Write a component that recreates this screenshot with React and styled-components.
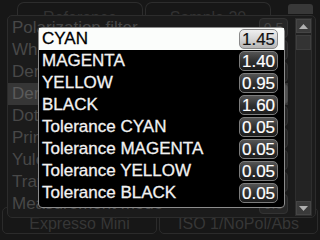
import styled, { createGlobalStyle } from "styled-components";

const GlobalStyle = createGlobalStyle`
  html, body {
    margin: 0;
    padding: 0;
    background: #171717;
  }
  body {
    font-family: "Liberation Sans", Arial, sans-serif;
  }
`;

const Screen = styled.div`
  position: relative;
  width: 320px;
  height: 240px;
  overflow: hidden;
  background: #171717;
`;

const TopTabs = styled.div`
  display: flex;
  align-items: flex-end;
  height: 15px;
  padding-left: 17px;
  gap: 2px;
`;

const Tab = styled.div`
  width: ${(p) => p.$w}px;
  height: 12px;
  border: 1px solid #2d2d2d;
  border-bottom: none;
  border-radius: 7px 7px 0 0;
  color: #323232;
  font-size: 16px;
  line-height: 30px;
  text-align: center;
  overflow: hidden;
`;

const CornerTab = styled.div`
  margin-left: auto;
  margin-right: 7px;
  width: 25px;
  height: 10px;
  margin-bottom: 1px;
  background: #383838;
  border-radius: 3px 3px 0 0;
`;

const Panel = styled.div`
  position: relative;
  z-index: 1;
  display: flex;
  margin-left: 7px;
  width: 307px;
  height: 201px;
  border: 1px solid #2c2c2c;
  border-radius: 5px;
  background: #1b1b1b;
`;

const List = styled.div`
  flex: 1;
  padding-top: 1px;
  padding-right: 7px;
  overflow: hidden;
`;

const BgRow = styled.div`
  display: flex;
  align-items: center;
  justify-content: space-between;
  height: 22px;
  padding-left: 4px;
  background: ${(p) => (p.$active ? "#363636" : "transparent")};
  color: ${(p) => (p.$active ? "#5a5a5a" : "#484848")};
  font-size: 17px;
  white-space: nowrap;
`;

const BgValue = styled.div`
  flex: none;
  width: 27px;
  height: 18px;
  border: 1px solid ${(p) => (p.$active ? "#4a4a4a" : "#333")};
  border-radius: 4px;
  background: ${(p) => (p.$active ? "#505050" : "#262626")};
  color: #444;
  font-size: 14px;
  line-height: 18px;
  text-align: center;
`;

const ScrollBar = styled.div`
  display: flex;
  flex-direction: column;
  width: 15px;
  margin: 2px 3px 1px 0;
  background: #232323;
  border: 1px solid #2e2e2e;
`;

const ArrowBtn = styled.div`
  display: flex;
  align-items: center;
  justify-content: center;
  height: 12px;
  background: #3a3a3a;
  border: 1px solid #454545;
`;

const Thumb = styled.div`
  height: 13px;
  margin-top: 2px;
  background: #333;
  border: 1px solid #3e3e3e;
`;

const Track = styled.div`
  flex: 1;
`;

const BottomTabs = styled.div`
  display: flex;
  gap: 2px;
  margin-top: -11px;
  padding-left: 2px;
`;

const BottomTab = styled.div`
  width: ${(p) => p.$w}px;
  height: 25px;
  border: 1px solid #2b2b2b;
  border-radius: 5px;
  color: #363636;
  font-size: 16px;
  line-height: 31px;
  text-align: center;
  overflow: hidden;
`;

const Popup = styled.div`
  position: absolute;
  z-index: 2;
  left: 38px;
  top: 27px;
  width: 245px;
  padding: 0 0 3px;
  border: 1px solid #8c8c8c;
  border-radius: 4px;
  background: #000;
`;

const Option = styled.div`
  display: flex;
  align-items: center;
  justify-content: space-between;
  height: 22px;
  padding: 0 6px 0 3px;
  background: ${(p) => (p.$selected ? "#fbfdfb" : "#000")};
  color: ${(p) => (p.$selected ? "#000" : "#f2f2f2")};
  font-size: 17px;
  -webkit-text-stroke: 0.3px ${(p) => (p.$selected ? "#000" : "#f2f2f2")};
`;

const ValueBox = styled.div`
  width: 37px;
  height: 18px;
  border: 1px solid ${(p) => (p.$selected ? "#8a8a8a" : "#7c7c7c")};
  border-radius: 5px;
  background: ${(p) =>
    p.$selected
      ? "linear-gradient(#efefef, #d6d6d6 50%, #b4b4b4)"
      : "linear-gradient(#555, #303030 50%, #1c1c1c)"};
  color: ${(p) => (p.$selected ? "#111" : "#fff")};
  -webkit-text-stroke: 0.2px ${(p) => (p.$selected ? "#111" : "#fff")};
  font-size: 17px;
  line-height: 19px;
  text-align: center;
`;

const bgRows = [
  "Polarization filter",
  "White base",
  "Density standard",
  "Density filter",
  "Dot gain",
  "Print characteristics",
  "Yule-Nielsen factor",
  "Trapping",
  "Measurement mode",
];

const options = [
  ["CYAN", "1.45"],
  ["MAGENTA", "1.40"],
  ["YELLOW", "0.95"],
  ["BLACK", "1.60"],
  ["Tolerance CYAN", "0.05"],
  ["Tolerance MAGENTA", "0.05"],
  ["Tolerance YELLOW", "0.05"],
  ["Tolerance BLACK", "0.05"],
];

export default function App() {
  return (
    <>
      <GlobalStyle />
      <Screen>
        <TopTabs>
          <Tab $w={124}>Reference</Tab>
          <Tab $w={124}>Sample 20</Tab>
          <CornerTab />
        </TopTabs>
        <Panel>
          <List>
            {bgRows.map((label, i) => (
              <BgRow key={label} $active={i === 3}>
                <span>{label}</span>
                <BgValue $active={i === 3}>0.5</BgValue>
              </BgRow>
            ))}
          </List>
          <ScrollBar>
            <ArrowBtn>
              <svg width="9" height="5" viewBox="0 0 9 5">
                <path d="M0 5 L4.5 0 L9 5 Z" fill="#b0b0b0" />
              </svg>
            </ArrowBtn>
            <Thumb />
            <Track />
            <ArrowBtn>
              <svg width="9" height="5" viewBox="0 0 9 5">
                <path d="M0 0 L9 0 L4.5 5 Z" fill="#b0b0b0" />
              </svg>
            </ArrowBtn>
          </ScrollBar>
        </Panel>
        <BottomTabs>
          <BottomTab $w={153}>Expresso Mini</BottomTab>
          <BottomTab $w={157}>ISO 1/NoPol/Abs</BottomTab>
        </BottomTabs>
        <Popup>
          {options.map(([label, value], i) => (
            <Option key={label} $selected={i === 0}>
              <span>{label}</span>
              <ValueBox $selected={i === 0}>{value}</ValueBox>
            </Option>
          ))}
        </Popup>
      </Screen>
    </>
  );
}
